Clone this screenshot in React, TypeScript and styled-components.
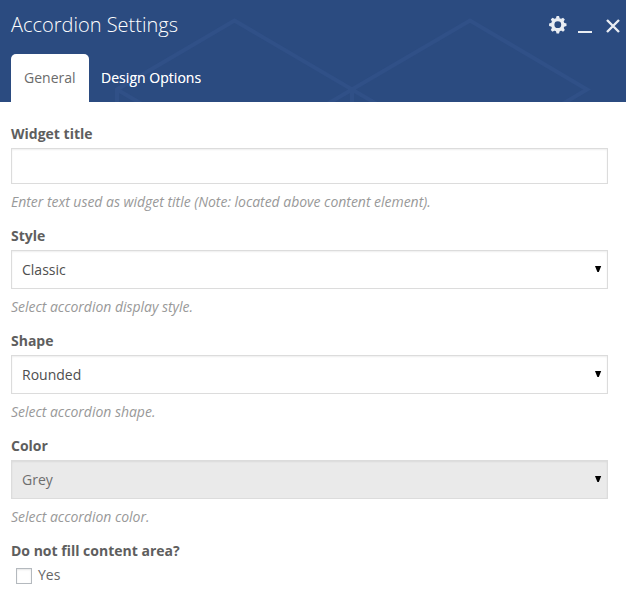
import React from "react";
import styled, { createGlobalStyle } from "styled-components";

const GlobalStyle = createGlobalStyle`
  * { box-sizing: border-box; }
  body {
    margin: 0;
    background: #fff;
    font-family: "Open Sans", sans-serif;
    font-size: 14px;
    line-height: 20px;
    overflow: hidden;
  }
`;

const Panel = styled.div`
  width: 626px;
  height: 592px;
  overflow: hidden;
`;

const Header = styled.header`
  position: relative;
  height: 102px;
  background: #2b4b80;
  display: flex;
  flex-direction: column;
  justify-content: space-between;
`;

const Pattern = styled.svg`
  position: absolute;
  inset: 0;
`;

const TitleBar = styled.div`
  position: relative;
  display: flex;
  justify-content: space-between;
  padding: 10px 6px 0 11px;
`;

const Title = styled.h1`
  margin: 0;
  font-size: 20px;
  line-height: 30px;
  font-weight: 300;
  color: #fff;
`;

const Controls = styled.div`
  display: flex;
  gap: 11px;
  padding-top: 6px;
`;

const ControlButton = styled.button<{ $width: number }>`
  display: flex;
  justify-content: flex-end;
  width: ${(p) => p.$width}px;
  height: 18px;
  padding: 0;
  border: 0;
  background: none;
  color: #e9edf3;

  svg { display: block; flex: none; }
`;

const Tabs = styled.nav`
  position: relative;
  display: flex;
  padding-left: 11px;
`;

const Tab = styled.button<{ $active?: boolean }>`
  height: 48px;
  padding: 0 ${(p) => (p.$active ? 13 : 12.5)}px;
  border: 0;
  border-radius: 5px 5px 0 0;
  background: ${(p) => (p.$active ? "#fff" : "transparent")};
  color: ${(p) => (p.$active ? "#6b6b6b" : "#fff")};
  font: 400 14px/20px "Open Sans", sans-serif;
  letter-spacing: ${(p) => (p.$active ? 0 : 0.03)}px;
  text-shadow: ${(p) => (p.$active ? "none" : "0 0 0.5px rgba(255, 255, 255, 0.6)")};
  white-space: nowrap;
`;

const Form = styled.form`
  padding: 22px 18px 0 11px;
`;

const Field = styled.div`
  display: flex;
  flex-direction: column;
  margin-bottom: 14px;
`;

const Label = styled.div`
  font-weight: 700;
  color: #5e5e5e;
  margin-bottom: 4px;
`;

const TextInput = styled.input`
  height: 36px;
  border: 1px solid #dcdcdc;
  box-shadow: inset 0 1px 2px rgba(0, 0, 0, 0.07);
  outline: 0;
`;

const Select = styled.div<{ $filled?: boolean }>`
  display: flex;
  align-items: center;
  justify-content: space-between;
  height: 39px;
  padding: 0 5px 0 10px;
  border: 1px solid #dcdcdc;
  box-shadow: inset 0 1px 2px rgba(0, 0, 0, 0.07);
  background: ${(p) => (p.$filled ? "#eaeaea" : "#fff")};
  color: ${(p) => (p.$filled ? "#6e6e6e" : "#4e4e4e")};
`;

const Hint = styled.div`
  margin-top: 8px;
  font-style: italic;
  letter-spacing: -0.025px;
  color: #999;
`;

const CheckRow = styled.label`
  display: flex;
  gap: 6px;
  padding-left: 5px;
  color: #666;
`;

const CheckBox = styled.input`
  appearance: none;
  width: 16px;
  height: 16px;
  margin: 3px 0 0;
  border: 1px solid #b4b9be;
  background: #fff;
  box-shadow: inset 0 1px 2px rgba(0, 0, 0, 0.1);
`;

const ArrowIcon = styled.svg`
  margin-bottom: 2px;
`;

const Arrow = () => (
  <ArrowIcon width="7" height="6" viewBox="0 0 7 6">
    <path d="M0 0H6.200L3.800 6H2.400Z" fill="#000" />
  </ArrowIcon>
);

const GearIcon = () => (
  <svg width="18" height="18" viewBox="-8.800 -8.700 18 18">
    <circle r="5.100" fill="none" stroke="currentColor" strokeWidth="3.400" />
    {[0, 45, 90, 135, 180, 225, 270, 315].map((angle) => (
      <path key={angle} d="M-2-6L-1.200-8.700H1.200L2-6Z" fill="currentColor" transform={`rotate(${angle})`} />
    ))}
  </svg>
);

const selects = [
  { label: "Style", value: "Classic", hint: "Select accordion display style." },
  { label: "Shape", value: "Rounded", hint: "Select accordion shape." },
  { label: "Color", value: "Grey", hint: "Select accordion color.", filled: true },
];

export default function App() {
  return (
    <>
      <GlobalStyle />
      <Panel>
        <Header>
          <Pattern width="626" height="102" viewBox="0 0 626 102">
            <path
              d="M117 105V89.500L234.500 20.500L352 89.500L470 20.500L587 89.500L470 158.500L352 89.500L234.500 158.500L117 89.500M352 89.500V105"
              fill="none"
              stroke="#305087"
              strokeWidth="4"
            />
          </Pattern>
          <TitleBar>
            <Title>Accordion Settings</Title>
            <Controls>
              <ControlButton $width={18} type="button" aria-label="Settings">
                <GearIcon />
              </ControlButton>
              <ControlButton $width={14} type="button" aria-label="Minimize">
                <svg width="14" height="18">
                  <path d="M0 15H14V17H0Z" fill="currentColor" />
                </svg>
              </ControlButton>
              <ControlButton $width={17} type="button" aria-label="Close">
                <svg width="14" height="18">
                  <path d="M1 4L13 16M13 4L1 16" stroke="currentColor" strokeWidth="2.400" />
                </svg>
              </ControlButton>
            </Controls>
          </TitleBar>
          <Tabs>
            <Tab $active type="button">General</Tab>
            <Tab type="button">Design Options</Tab>
          </Tabs>
        </Header>
        <Form>
          <Field>
            <Label>Widget title</Label>
            <TextInput type="text" aria-label="Widget title" />
            <Hint>Enter text used as widget title (Note: located above content element).</Hint>
          </Field>
          {selects.map((s) => (
            <Field key={s.label}>
              <Label>{s.label}</Label>
              <Select $filled={s.filled}>
                {s.value}
                <Arrow />
              </Select>
              <Hint>{s.hint}</Hint>
            </Field>
          ))}
          <Field>
            <Label>Do not fill content area?</Label>
            <CheckRow>
              <CheckBox type="checkbox" />
              Yes
            </CheckRow>
          </Field>
        </Form>
      </Panel>
    </>
  );
}
